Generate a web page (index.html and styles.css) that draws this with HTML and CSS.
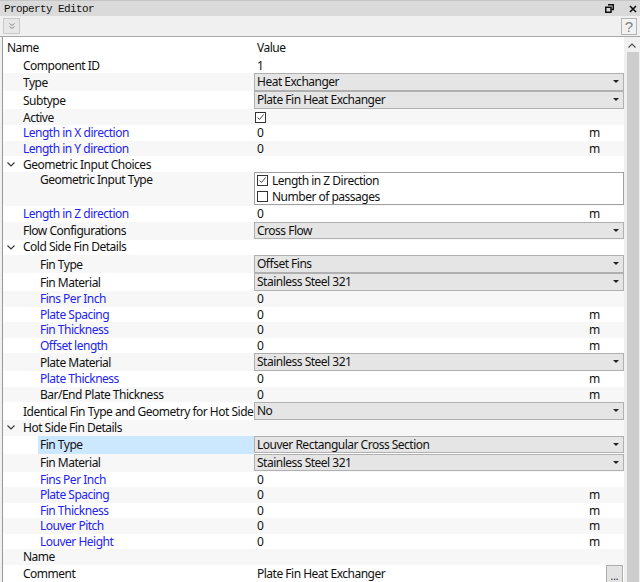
FILE: index.html
```html
<!DOCTYPE html>
<html>
<head>
<meta charset="utf-8">
<title>Property Editor</title>
<link rel="stylesheet" href="styles.css">
</head>
<body>
<div class="window">
  <div class="titlebar">
    <span class="title-text">Property Editor</span>
    <span class="title-btns">
      <svg class="ic-float" width="9" height="9" viewBox="0 0 9 9"><path d="M3 0.75H8.25V5.5H6.5M0.75 3.25H6V8.25H0.75Z" fill="none" stroke="#111" stroke-width="1.5"/></svg>
      <svg class="ic-close" width="8" height="8" viewBox="0 0 8 8"><path d="M1 1L7 7M7 1L1 7" stroke="#111" stroke-width="1.6"/></svg>
    </span>
  </div>
  <div class="toolbar">
    <span class="tb-btn"><svg width="6" height="7" viewBox="0 0 6 7"><path d="M0.5 0.5L3 2.5L5.5 0.5M0.5 3.5L3 5.5L5.5 3.5" fill="none" stroke="#8a8a8a" stroke-width="1"/></svg></span>
    <span class="help-btn">?</span>
  </div>
  <div class="tree-area">
    <div class="tree">
      <div class="row header"><div class="name"><span class="label">Name</span></div><div class="value">Value</div></div>

      <div class="row"><div class="name"><span class="label">Component ID</span></div><div class="value">1</div></div>
      <div class="row combo-row alt"><div class="name"><span class="label">Type</span></div><div class="value"><div class="combo"><span>Heat Exchanger</span><span class="arrow"></span></div></div></div>
      <div class="row combo-row"><div class="name"><span class="label">Subtype</span></div><div class="value"><div class="combo"><span>Plate Fin Heat Exchanger</span><span class="arrow"></span></div></div></div>
      <div class="row check-row alt"><div class="name"><span class="label">Active</span></div><div class="value"><span class="cb"><svg width="9" height="9" viewBox="0 0 9 9"><path d="M1.5 4.5L3.5 6.5L7.5 1.5" fill="none" stroke="#444" stroke-width="1"/></svg></span></div></div>
      <div class="row"><div class="name"><span class="label blue">Length in X direction</span></div><div class="value"><span>0</span><span class="unit">m</span></div></div>
      <div class="row alt"><div class="name"><span class="label blue">Length in Y direction</span></div><div class="value"><span>0</span><span class="unit">m</span></div></div>
      <div class="row group g1"><div class="name"><span class="exp"><svg width="8" height="5" viewBox="0 0 8 5"><path d="M0.5 0.5L4 4L7.5 0.5" fill="none" stroke="#333" stroke-width="1.1"/></svg></span><span class="label">Geometric Input Choices</span></div><div class="value"></div></div>
      <div class="row tall alt"><div class="name l1"><span class="label">Geometric Input Type</span></div><div class="value"><div class="choice-box">
        <div class="choice"><span class="cb"><svg width="9" height="9" viewBox="0 0 9 9"><path d="M1.5 4.5L3.5 6.5L7.5 1.5" fill="none" stroke="#444" stroke-width="1"/></svg></span><span>Length in Z Direction</span></div>
        <div class="choice"><span class="cb"></span><span>Number of passages</span></div>
      </div></div></div>
      <div class="row"><div class="name"><span class="label blue">Length in Z direction</span></div><div class="value"><span>0</span><span class="unit">m</span></div></div>
      <div class="row combo-row alt"><div class="name"><span class="label">Flow Configurations</span></div><div class="value"><div class="combo"><span>Cross Flow</span><span class="arrow"></span></div></div></div>
      <div class="row group"><div class="name"><span class="exp"><svg width="8" height="5" viewBox="0 0 8 5"><path d="M0.5 0.5L4 4L7.5 0.5" fill="none" stroke="#333" stroke-width="1.1"/></svg></span><span class="label">Cold Side Fin Details</span></div><div class="value"></div></div>
      <div class="row combo-row alt"><div class="name l1"><span class="label">Fin Type</span></div><div class="value"><div class="combo"><span>Offset Fins</span><span class="arrow"></span></div></div></div>
      <div class="row combo-row"><div class="name l1"><span class="label">Fin Material</span></div><div class="value"><div class="combo"><span>Stainless Steel 321</span><span class="arrow"></span></div></div></div>
      <div class="row alt"><div class="name l1"><span class="label blue">Fins Per Inch</span></div><div class="value"><span>0</span></div></div>
      <div class="row"><div class="name l1"><span class="label blue">Plate Spacing</span></div><div class="value"><span>0</span><span class="unit">m</span></div></div>
      <div class="row alt"><div class="name l1"><span class="label blue">Fin Thickness</span></div><div class="value"><span>0</span><span class="unit">m</span></div></div>
      <div class="row"><div class="name l1"><span class="label blue">Offset length</span></div><div class="value"><span>0</span><span class="unit">m</span></div></div>
      <div class="row combo-row alt"><div class="name l1"><span class="label">Plate Material</span></div><div class="value"><div class="combo"><span>Stainless Steel 321</span><span class="arrow"></span></div></div></div>
      <div class="row"><div class="name l1"><span class="label blue">Plate Thickness</span></div><div class="value"><span>0</span><span class="unit">m</span></div></div>
      <div class="row alt"><div class="name l1"><span class="label">Bar/End Plate Thickness</span></div><div class="value"><span>0</span><span class="unit">m</span></div></div>
      <div class="row combo-row"><div class="name"><span class="label">Identical Fin Type and Geometry for Hot Side</span></div><div class="value"><div class="combo"><span>No</span><span class="arrow"></span></div></div></div>
      <div class="row group alt"><div class="name"><span class="exp"><svg width="8" height="5" viewBox="0 0 8 5"><path d="M0.5 0.5L4 4L7.5 0.5" fill="none" stroke="#333" stroke-width="1.1"/></svg></span><span class="label">Hot Side Fin Details</span></div><div class="value"></div></div>
      <div class="row combo-row"><div class="name l1"><span class="label sel">Fin Type</span></div><div class="value"><div class="combo"><span>Louver Rectangular Cross Section</span><span class="arrow"></span></div></div></div>
      <div class="row combo-row alt"><div class="name l1"><span class="label">Fin Material</span></div><div class="value"><div class="combo"><span>Stainless Steel 321</span><span class="arrow"></span></div></div></div>
      <div class="row"><div class="name l1"><span class="label blue">Fins Per Inch</span></div><div class="value"><span>0</span></div></div>
      <div class="row alt"><div class="name l1"><span class="label blue">Plate Spacing</span></div><div class="value"><span>0</span><span class="unit">m</span></div></div>
      <div class="row"><div class="name l1"><span class="label blue">Fin Thickness</span></div><div class="value"><span>0</span><span class="unit">m</span></div></div>
      <div class="row alt"><div class="name l1"><span class="label blue">Louver Pitch</span></div><div class="value"><span>0</span><span class="unit">m</span></div></div>
      <div class="row"><div class="name l1"><span class="label blue">Louver Height</span></div><div class="value"><span>0</span><span class="unit">m</span></div></div>
      <div class="row alt"><div class="name"><span class="label">Name</span></div><div class="value"></div></div>
      <div class="row comment-row"><div class="name"><span class="label">Comment</span></div><div class="value"><span>Plate Fin Heat Exchanger</span><span class="dots">...</span></div></div>
    </div>
    <div class="scrollbar">
      <div class="sb-up"><svg width="8" height="5" viewBox="0 0 8 5"><path d="M0.5 4.5L4 1L7.5 4.5" fill="none" stroke="#505050" stroke-width="1.2"/></svg></div>
      <div class="thumb"></div>
    </div>
  </div>
</div>
</body>
</html>
```

FILE: styles.css
```css
* { box-sizing: border-box; }
html, body { margin: 0; padding: 0; }
body {
  width: 640px;
  height: 582px;
  overflow: hidden;
  background: #f0f0f0;
  font-family: "Noto Sans", "Open Sans", sans-serif;
  font-size: 12px;
  line-height: 15px;
  letter-spacing: -0.5px;
  color: #111;
}
.window { display: flex; flex-direction: column; height: 582px; }

.titlebar {
  height: 16px;
  flex: none;
  background: #dadada;
  border-top: 1px solid #c6c6c6;
  display: flex;
  align-items: center;
  padding-left: 4px;
  padding-right: 3px;
}
.title-text {
  flex: 1;
  font-family: "Liberation Mono", "DejaVu Sans Mono", monospace;
  font-size: 11px;
  line-height: 14px;
  letter-spacing: -0.6px;
  color: #111;
}
.title-btns { display: flex; align-items: center; gap: 15px; }

.toolbar {
  height: 21px;
  flex: none;
  background: #f0f0f0;
  border-bottom: 1px solid #a8a8a8;
  display: flex;
  align-items: center;
  justify-content: space-between;
  padding: 0 3px 0 3px;
}
.tb-btn {
  width: 17px;
  height: 16px;
  border: 1px solid #c9c9c9;
  background: #e7e7e7;
  display: flex;
  align-items: center;
  justify-content: center;
}
.help-btn {
  width: 16px;
  height: 17px;
  border: 1px solid #b4b4b4;
  background: #f2f2f2;
  color: #808080;
  font-family: "Liberation Sans", sans-serif;
  font-size: 15px;
  letter-spacing: 0;
  line-height: 16px;
  text-align: center;
}

.tree-area {
  flex: 1;
  display: flex;
  padding-left: 2px;
  overflow: hidden;
  background: #f0f0f0;
}
.tree {
  width: 622px;
  flex: none;
  background: #fff;
  border-left: 1px solid #9a9a9a;
  overflow: hidden;
}
.scrollbar {
  flex: 1;
  background: #f0f0f0;
  display: flex;
  flex-direction: column;
  align-items: center;
}
.sb-up {
  height: 15px;
  width: 16px;
  display: flex;
  align-items: center;
  justify-content: center;
  padding-top: 2px;
}
.thumb {
  width: 12px;
  flex: 1;
  margin-left: 1px;
  background: #cdcdcd;
}

.row {
  display: flex;
  height: 15.5px;
  flex: none;
}
.row.alt { background: #f7f7f7; }
.row.header { height: 20.5px; }
.row.header .name { padding-left: 2px; }
.row.combo-row { height: 18px; }
.row.check-row { height: 16px; }
.row.group.g1 { height: 16px; }
.row.tall { height: 34px; }
.row.comment-row { height: 18px; }

.name {
  width: 251px;
  flex: none;
  display: flex;
  align-items: stretch;
  padding-left: 18px;
  white-space: nowrap;
}
.name.l1 { padding-left: 35px; }
.label {
  display: flex;
  align-items: center;
  padding-left: 2px;
  flex: 1;
}
.row.group .label { padding-bottom: 1px; }
.row.group.g1 .label { padding-bottom: 0; }
.label.blue { color: #2323f2; }
.label.sel { background: #cce8ff; }
.exp {
  width: 14px;
  margin-left: -14px;
  display: flex;
  align-items: center;
}
.row.tall .name { align-items: flex-start; }
.row.tall .label { align-items: flex-start; line-height: 14px; padding-top: 1px; }

.value {
  flex: 1;
  display: flex;
  align-items: center;
  padding-left: 3px;
  min-width: 0;
  white-space: nowrap;
}
.unit { margin-left: auto; width: 35px; }

.combo-row .value { padding-left: 0; align-items: flex-start; }
.combo {
  flex: 1;
  height: 17.5px;
  border: 1px solid #b0b0b0;
  background: #e5e5e5;
  display: flex;
  align-items: center;
  justify-content: space-between;
  padding-left: 2px;
  padding-right: 4px;
}
.arrow {
  width: 0;
  height: 0;
  border-left: 3px solid transparent;
  border-right: 3px solid transparent;
  border-top: 3px solid #222;
}

.cb {
  width: 11px;
  height: 11px;
  flex: none;
  border: 1px solid #333;
  background: #fff;
  display: flex;
  align-items: center;
  justify-content: center;
}
.check-row .value { padding-left: 1px; }

.row.tall .value { padding-left: 0; align-items: flex-start; }
.choice-box {
  flex: 1;
  height: 33px;
  border: 1px solid #a0a0a0;
  background: #fff;
  padding: 0 0 0 2px;
  display: flex;
  flex-direction: column;
}
.choice {
  height: 15.5px;
  display: flex;
  align-items: center;
  gap: 4px;
}

.comment-row .value { align-items: flex-start; padding-top: 1px; }
.dots {
  margin-left: auto;
  margin-right: 1px;
  margin-top: -0.5px;
  width: 17px;
  height: 18px;
  border: 1px solid #adadad;
  background: #e3e3e3;
  font-size: 10px;
  letter-spacing: 0;
  line-height: 20px;
  text-align: center;
  color: #222;
}
```
